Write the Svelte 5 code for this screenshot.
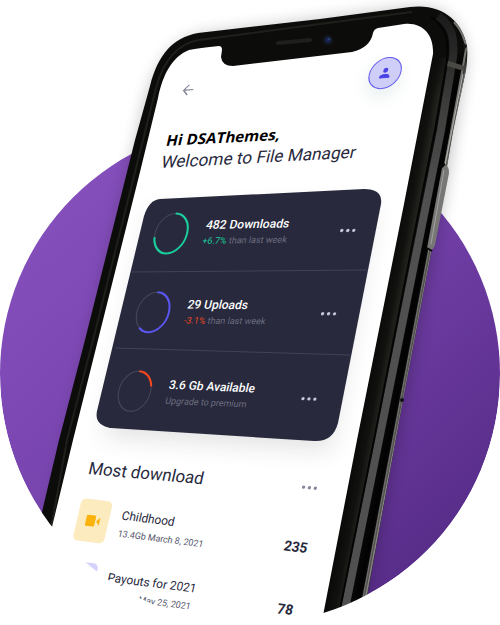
<script>
  const stats = [
    { title: '482 Downloads', accent: '+6.7%', note: 'than last week', color: '#19cf9c', trend: '#19cf9c', share: 72, tilt: -1 },
    { title: '29 Uploads', accent: '-3.1%', note: 'than last week', color: '#5a55f0', trend: '#e8481f', share: 60, tilt: 0.5 },
    { title: '3.6 Gb Available', accent: '', note: 'Upgrade to premium', color: '#f4461c', trend: '', share: 20, tilt: 2.5 }
  ];

  const files = [
    { name: 'Childhood', meta: '13.4Gb March 8, 2021', count: 235, kind: 'video' },
    { name: 'Payouts for 2021', meta: '12.15Gb May 25, 2021', count: 78, kind: 'doc' }
  ];
</script>

{#snippet dots(label)}
  <button class="dots" aria-label={label}>
    <svg viewBox="0 0 16 6" width="16" height="6" aria-hidden="true">
      <circle cx="2" cy="3" r="1.7" /><circle cx="8" cy="3" r="1.7" /><circle cx="14" cy="3" r="1.7" />
    </svg>
  </button>
{/snippet}

<main class="stage">
  <svg class="scene" viewBox="0 0 500 624" aria-hidden="true">
    <defs>
      <linearGradient id="disc" x1="0.1" y1="0.1" x2="0.85" y2="0.9">
        <stop offset="0" stop-color="#8650bd" />
        <stop offset="0.45" stop-color="#7743ad" />
        <stop offset="1" stop-color="#572c88" />
      </linearGradient>
      <linearGradient id="side" gradientUnits="userSpaceOnUse" x1="404" y1="200" x2="441" y2="207">
        <stop offset="0" stop-color="#0b0b09" />
        <stop offset="0.22" stop-color="#11110f" />
        <stop offset="0.42" stop-color="#24241f" />
        <stop offset="0.5" stop-color="#0a0a0a" />
        <stop offset="0.8" stop-color="#020202" />
        <stop offset="0.86" stop-color="#080808" />
        <stop offset="0.89" stop-color="#747370" />
        <stop offset="0.93" stop-color="#4c4b49" />
        <stop offset="0.96" stop-color="#8c8b88" />
        <stop offset="1" stop-color="#4d4c4a" />
      </linearGradient>
      <linearGradient id="band" gradientUnits="userSpaceOnUse" x1="0" y1="15" x2="0" y2="200">
        <stop offset="0" stop-color="#1a1a1a" />
        <stop offset="0.5" stop-color="#3e3e3d" />
        <stop offset="1" stop-color="#505050" />
      </linearGradient>
      <linearGradient id="fade" x1="0" y1="0" x2="0" y2="1">
        <stop offset="0.06" stop-color="#000" />
        <stop offset="0.15" stop-color="#fff" />
      </linearGradient>
      <mask id="sideMask" maskUnits="userSpaceOnUse" x="300" y="0" width="200" height="624">
        <rect x="300" y="0" width="200" height="624" fill="url(#fade)" />
      </mask>
      <filter id="soft" x="-20%" y="-20%" width="140%" height="140%"><feGaussianBlur stdDeviation="8" /></filter>
      <filter id="haze" x="-20%" y="-20%" width="140%" height="140%"><feGaussianBlur stdDeviation="12" /></filter>
    </defs>

    <circle cx="250" cy="374" r="250" fill="url(#disc)" />

    <path d="M142 118Q158 40 206 34L410 8Q462 4 466 60L445 190L366 600L30 600Z" fill="#000" opacity="0.24" filter="url(#soft)" />

    <!-- handset body -->
    <path d="M18 624L42 512L59 440L85 340L135 140L150 86C158 55 172 38 198 33L320 19L410 7C442 3 462 21 467 46Q468 56 466 70L453 130L443 190L403 400L362 624Z" fill="#0c0c0a" />
    <path d="M38 600L67 440L93 340L143 140L156 88C163 62 176 44 199 40L320 24L412 12" fill="none" stroke="#1f1f1b" stroke-width="2" />
    <g mask="url(#sideMask)">
      <path d="M432 60L467 52L466 70L453 132L443 190L403 400L362 624L321 624L357 440L404 200Z" fill="url(#side)" />
    </g>
    <path d="M438 16C452 26 455 38 453 57L441 130L427 200L379 440L342 624" fill="none" stroke="url(#band)" stroke-width="8" />
    <path d="M431 17C446 27 449 39 447 61L435 130L421 200L374 440L337 624" fill="none" stroke="#050505" stroke-width="2" />
    <path d="M454 22Q465 34 466 49L462 72L445 165" fill="none" stroke="#777673" stroke-width="2" />
    <path d="M463 74L445 165" fill="none" stroke="#b1b0ad" stroke-width="1" />
    <path d="M448 61L465 66L464 71L447 66Z" fill="#4a4943" />
    <path d="M463 42L467 46L464 51Z" fill="#161616" />
    <path d="M442 168Q449 162 449 173L435 245Q433 252 427 248Z" fill="#777776" />
    <path d="M444 170L431 244" fill="none" stroke="#a3a3a2" stroke-width="1" />
    <path d="M439 167L445 164M427 248L432 251" stroke="#0a0a0a" stroke-width="2" />
    <circle cx="402" cy="400" r="2" fill="#111" />

    <!-- display with its notch -->
    <path d="M28 626L52 527L73 440L98 340L140 172L158 98C163 74 172 57 189 50Q199 48 219 46Q222 46 222 50L221 57Q222 66 233 66L352 52Q370 48 373 33Q374 29 378 28L404 24C424 22 434 36 433 54L404 204L357 440L321 626Z" fill="#fff" />
    <path d="M278 43L310 40" stroke="#1f1f1d" stroke-width="4" stroke-linecap="round" />
    <circle cx="328" cy="40" r="5" fill="#14161f" /><circle cx="328" cy="40" r="3" fill="#17244a" /><circle cx="329" cy="39" r="1" fill="#34477a" />

    <!-- statistics card -->
    <path d="M152 214L374 206L330 450L104 436Z" fill="#222" opacity="0.13" filter="url(#haze)" />
    <path d="M160 199L364 189Q383 189 381 204L338 423Q333 442 314 441L111 428Q94 425 97 411L144 216Q149 200 160 199Z" fill="#28293d" />
    <path d="M132 272L367 270M115 348L350 355" stroke="#424356" stroke-width="1" />
  </svg>

  <div class="screen">
    <header class="bar">
      <button class="back" aria-label="Back">
        <svg viewBox="0 0 12 12" width="12" height="12"><path d="M11 6H1.5M6 1L1.5 6L6 11" /></svg>
      </button>
      <button class="avatar" aria-label="Profile">
        <svg viewBox="0 0 12 12" width="12" height="12"><circle cx="6" cy="3.2" r="2.4" /><path d="M1 11V9.6C1 7.8 3.6 7 6 7S11 7.8 11 9.6V11Z" /></svg>
      </button>
    </header>

    <h1 class="greeting"><strong>Hi DSAThemes,</strong><span>Welcome to File Manager</span></h1>

    <section class="card" aria-label="Statistics">
      {#each stats as s}
        <div class="stat" style:transform="skewY({s.tilt}deg)">
          <svg class="ring" viewBox="0 0 34 42" width="34" height="42" aria-hidden="true">
            <path d="M17 1A16 20 0 0 1 17 41A16 20 0 0 1 17 1" stroke="#48495b" />
            <path d="M17 1A16 20 0 0 1 17 41A16 20 0 0 1 17 1" stroke={s.color} stroke-width="2" pathLength="100" stroke-dasharray="{s.share} 100" />
          </svg>
          <div class="text">
            <h2>{s.title}</h2>
            <p>{#if s.accent}<b style:color={s.trend}>{s.accent}</b>{' '}{/if}{s.note}</p>
          </div>
          {@render dots(`${s.title} options`)}
        </div>
      {/each}
    </section>

    <section class="list" aria-label="Most download">
      <div class="heading">
        <h2>Most download</h2>
        {@render dots('List options')}
      </div>
      {#each files as f}
        <div class="file">
          <span class="thumb {f.kind}">
            {#if f.kind === 'video'}
              <svg viewBox="0 0 16 12" width="16" height="12" aria-hidden="true"><rect x="1" y="0.5" width="9.5" height="11" rx="1.2" /><path d="M11.5 6L15 2V10Z" /></svg>
            {/if}
          </span>
          <div class="text">
            <h3>{f.name}</h3>
            <p>{f.meta}</p>
          </div>
          <b class="count">{f.count}</b>
        </div>
      {/each}
    </section>
  </div>

  <!-- white surround that rounds off the bottom of the artwork -->
  <svg class="scene surround" viewBox="0 0 500 624" aria-hidden="true">
    <path d="M-2 374V630H502V374H500A250 250 0 0 1 0 374Z" fill="#fff" />
  </svg>
</main>

<style>
  :global(body) { background: #fff; }
  .stage {
    display: grid;
    max-width: 500px;
    margin: 0 auto;
    aspect-ratio: 500 / 624;
    overflow: hidden;
    font-family: Roboto, "Liberation Sans", sans-serif;
    color: #28293d;
  }
  .scene, .screen { grid-area: 1 / 1; min-width: 0; min-height: 0; }
  .scene { width: 100%; display: block; }
  .surround { z-index: 1; pointer-events: none; }
  .screen {
    box-sizing: border-box;
    padding: 75px 66px 0 197px;
    transform: skewX(-13deg);
    transform-origin: 0 0;
  }
  h1, h2, h3, p { margin: 0; font-weight: 400; }
  button { border: 0; padding: 0; background: none; color: inherit; cursor: pointer; }
  button svg { display: block; }

  .bar {
    display: flex;
    align-items: center;
    justify-content: space-between;
    height: 32px;
    padding: 0 16px 0 6px;
    transform: skewY(-5deg);
    transform-origin: 0 50%;
  }
  .back path { fill: none; stroke: #7d7e95; stroke-width: 1.2; }
  .avatar {
    display: grid;
    place-items: center;
    box-sizing: border-box;
    width: 32px;
    height: 32px;
    border: 1px solid #6259ee;
    border-radius: 50%;
    background: #cfcef8;
    box-shadow: 0 8px 16px rgba(60, 120, 120, 0.12);
  }
  .avatar svg { fill: #4a43e6; }

  .greeting {
    display: grid;
    margin: 22px 0;
    padding-left: 2px;
    font-size: 17px;
    line-height: 22px;
    white-space: nowrap;
    transform: skewY(-3deg);
    transform-origin: 0 50%;
  }
  .greeting strong { font-family: "Open Sans", "Noto Sans", sans-serif; font-size: 15px; color: #000; }

  .stat {
    display: flex;
    align-items: center;
    gap: 16px;
    height: 78px;
    padding: 0 25px 0 11px;
    transform-origin: 0 50%;
  }
  .ring { flex: none; overflow: visible; fill: none; }
  .text { flex: 1; white-space: nowrap; }
  .stat h2 { font-size: 12px; line-height: 16px; font-weight: 500; color: #fff; }
  .stat p { font-size: 9px; line-height: 16px; color: #6c6d7e; }
  .stat b { font-weight: 400; }
  .dots { fill: #c3c4d6; }

  .list { padding-top: 25px; }
  .heading {
    display: flex;
    align-items: center;
    justify-content: space-between;
    height: 28px;
    padding-right: 4px;
    transform: skewY(5deg);
    transform-origin: 0 50%;
  }
  .heading h2 { font-size: 17px; }
  .heading :global(.dots) { fill: #85869a; }
  .file {
    display: flex;
    align-items: center;
    gap: 12px;
    height: 42px;
    margin: 16px 0 20px;
    transform: skewY(7deg);
    transform-origin: 0 50%;
  }
  .thumb {
    display: grid;
    place-items: center;
    width: 32px;
    height: 42px;
    border-radius: 5px;
  }
  .video { background: #fbebbf; fill: #fbb30b; }
  .doc { background: #d5d2fb; }
  .file h3 { font-size: 12px; line-height: 18px; }
  .file p { font-size: 9px; line-height: 18px; color: #55566a; }
  .count { font-size: 14px; font-weight: 700; }
</style>
